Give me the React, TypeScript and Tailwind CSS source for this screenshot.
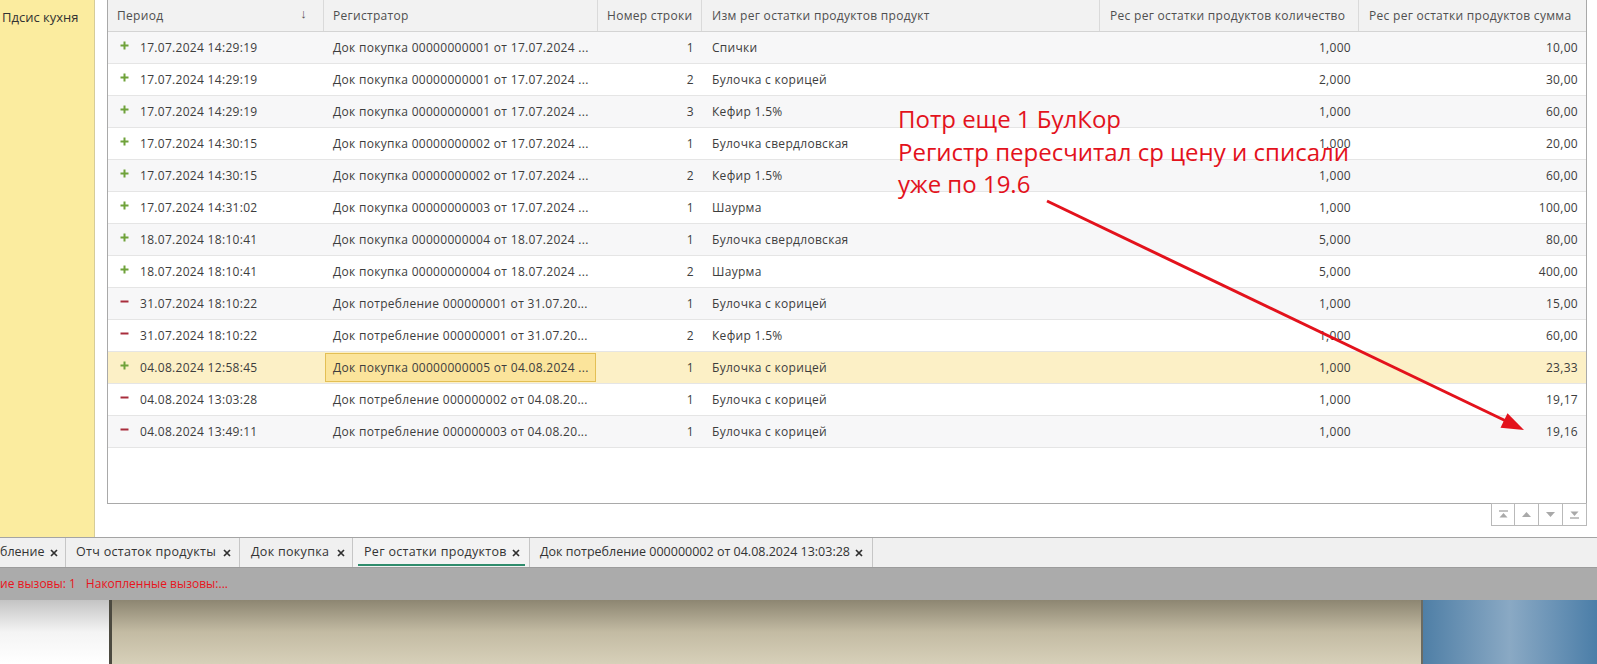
import React from "react";

type Row = {
  sign: "+" | "-";
  period: string;
  reg: string;
  line: string;
  product: string;
  qty: string;
  sum: string;
};

const rows: Row[] = [
  { sign: "+", period: "17.07.2024 14:29:19", reg: "Док покупка 00000000001 от 17.07.2024 ...", line: "1", product: "Спички", qty: "1,000", sum: "10,00" },
  { sign: "+", period: "17.07.2024 14:29:19", reg: "Док покупка 00000000001 от 17.07.2024 ...", line: "2", product: "Булочка с корицей", qty: "2,000", sum: "30,00" },
  { sign: "+", period: "17.07.2024 14:29:19", reg: "Док покупка 00000000001 от 17.07.2024 ...", line: "3", product: "Кефир 1.5%", qty: "1,000", sum: "60,00" },
  { sign: "+", period: "17.07.2024 14:30:15", reg: "Док покупка 00000000002 от 17.07.2024 ...", line: "1", product: "Булочка свердловская", qty: "1,000", sum: "20,00" },
  { sign: "+", period: "17.07.2024 14:30:15", reg: "Док покупка 00000000002 от 17.07.2024 ...", line: "2", product: "Кефир 1.5%", qty: "1,000", sum: "60,00" },
  { sign: "+", period: "17.07.2024 14:31:02", reg: "Док покупка 00000000003 от 17.07.2024 ...", line: "1", product: "Шаурма", qty: "1,000", sum: "100,00" },
  { sign: "+", period: "18.07.2024 18:10:41", reg: "Док покупка 00000000004 от 18.07.2024 ...", line: "1", product: "Булочка свердловская", qty: "5,000", sum: "80,00" },
  { sign: "+", period: "18.07.2024 18:10:41", reg: "Док покупка 00000000004 от 18.07.2024 ...", line: "2", product: "Шаурма", qty: "5,000", sum: "400,00" },
  { sign: "-", period: "31.07.2024 18:10:22", reg: "Док потребление 000000001 от 31.07.20...", line: "1", product: "Булочка с корицей", qty: "1,000", sum: "15,00" },
  { sign: "-", period: "31.07.2024 18:10:22", reg: "Док потребление 000000001 от 31.07.20...", line: "2", product: "Кефир 1.5%", qty: "1,000", sum: "60,00" },
  { sign: "+", period: "04.08.2024 12:58:45", reg: "Док покупка 00000000005 от 04.08.2024 ...", line: "1", product: "Булочка с корицей", qty: "1,000", sum: "23,33" },
  { sign: "-", period: "04.08.2024 13:03:28", reg: "Док потребление 000000002 от 04.08.20...", line: "1", product: "Булочка с корицей", qty: "1,000", sum: "19,17" },
  { sign: "-", period: "04.08.2024 13:49:11", reg: "Док потребление 000000003 от 04.08.20...", line: "1", product: "Булочка с корицей", qty: "1,000", sum: "19,16" },
];

const SELECTED = 10;

function Sign({ sign }: { sign: "+" | "-" }) {
  if (sign === "+") {
    return (
      <svg width="9" height="9" viewBox="0 0 9 9" className="mb-[5px] shrink-0">
        <path d="M4.5 0.5v8M0.5 4.5h8" stroke="#6fa23a" strokeWidth="2" />
      </svg>
    );
  }
  return (
    <svg width="9" height="9" viewBox="0 0 9 9" className="mb-[5px] shrink-0">
      <path d="M0.5 4.5h8" stroke="#a82d3c" strokeWidth="2" />
    </svg>
  );
}

function CloseX() {
  return (
    <svg width="8" height="8" viewBox="0 0 8 8" className="shrink-0">
      <path d="M1 1l6 6M7 1l-6 6" stroke="#2f2f2f" strokeWidth="1.7" />
    </svg>
  );
}

function NavButton({ kind }: { kind: "first" | "up" | "down" | "last" }) {
  return (
    <div className="w-[24px] h-[22px] border-r border-b border-[#b9b9b9] first:border-l flex items-center justify-center bg-white">
      <svg width="11" height="9" viewBox="0 0 11 9">
        {kind === "first" && (
          <>
            <path d="M1 1h9" stroke="#a9a9a9" strokeWidth="1.4" />
            <path d="M5.5 3L9.5 7.5H1.5Z" fill="#a9a9a9" />
          </>
        )}
        {kind === "up" && <path d="M5.5 2L10 7H1Z" fill="#a9a9a9" />}
        {kind === "down" && <path d="M5.5 7L10 2H1Z" fill="#a9a9a9" />}
        {kind === "last" && (
          <>
            <path d="M5.5 6L9.5 1.5H1.5Z" fill="#a9a9a9" />
            <path d="M1 8h9" stroke="#a9a9a9" strokeWidth="1.4" />
          </>
        )}
      </svg>
    </div>
  );
}

const cols = "grid grid-cols-[216px_274px_104px_398px_259px_227px]";

export default function App() {
  return (
    <div className="relative w-[1597px] h-[664px] overflow-hidden bg-white flex flex-col font-['Open_Sans',sans-serif] text-[12px] tracking-[0.3px] text-[#3d3d3d]">
      {/* main form */}
      <div className="flex h-[537px] shrink-0">
        <aside className="w-[95px] shrink-0 bg-[#fbec9f] border-r border-[#d6cc98] pl-[2px] pt-[8px] text-[13px] tracking-normal text-[#333]">
          Пдсис кухня
        </aside>
        <div className="flex-1 pl-[12px] pr-[10px] flex flex-col">
          <div className="h-[504px] border-x border-b border-[#a9a9a9] flex flex-col">
            {/* header */}
            <div className={`${cols} h-[32px] bg-[#f2f2f2] border-b border-[#d4d4d4] text-[#4f4f4f] shrink-0 whitespace-nowrap`}>
              <div className="flex items-center justify-between pl-[9px] pr-[16px] border-r border-[#dadada]">
                <span>Период</span>
                <span className="text-[13px] text-[#555] -mt-[4px]">↓</span>
              </div>
              <div className="flex items-center pl-[9px] border-r border-[#dadada]">Регистратор</div>
              <div className="flex items-center pl-[9px] border-r border-[#dadada]">Номер строки</div>
              <div className="flex items-center pl-[10px] border-r border-[#dadada]">Изм рег остатки продуктов продукт</div>
              <div className="flex items-center pl-[10px] border-r border-[#dadada]">Рес рег остатки продуктов количество</div>
              <div className="flex items-center pl-[10px]">Рес рег остатки продуктов сумма</div>
            </div>
            {/* rows */}
            {rows.map((r, i) => {
              const selected = i === SELECTED;
              const bg = selected ? "bg-[#fcf0c6]" : i % 2 === 0 ? "bg-[#f7f7f8]" : "bg-white";
              return (
                <div key={i} className={`${cols} h-[32px] border-b border-[#e5e5e5] ${bg} shrink-0 whitespace-nowrap`}>
                  <div className="flex items-center pl-[12px]">
                    <Sign sign={r.sign} />
                    <span className="ml-[11px]">{r.period}</span>
                  </div>
                  <div className="flex items-center py-[1px] pl-[1px] pr-[2px]">
                    <div
                      className={`w-full h-full flex items-center pl-[7px] overflow-hidden ${
                        selected ? "bg-[#fbe49b] border border-[#e3bf55]" : "border border-transparent"
                      }`}
                    >
                      {r.reg}
                    </div>
                  </div>
                  <div className="flex items-center justify-end pr-[8px]">{r.line}</div>
                  <div className="flex items-center pl-[10px]">{r.product}</div>
                  <div className="flex items-center justify-end pr-[8px]">{r.qty}</div>
                  <div className="flex items-center justify-end pr-[8px]">{r.sum}</div>
                </div>
              );
            })}
            <div className="flex-1 bg-white" />
          </div>
          <div className="flex justify-end -mt-[1px]">
            <div className="flex border-t border-[#b9b9b9]">
              <NavButton kind="first" />
              <NavButton kind="up" />
              <NavButton kind="down" />
              <NavButton kind="last" />
            </div>
          </div>
        </div>
      </div>

      {/* tabs */}
      <div className="h-[31px] shrink-0 flex bg-[#f0f0f0] border-t border-[#a4a4a4] text-[12.5px] text-[#333] border-b border-b-[#9c9c9c] whitespace-nowrap">
        <div className="w-[66px] flex items-center gap-[6px] border-r border-[#c6c6c6] tracking-[0px]">
          <span>бление</span>
          <CloseX />
        </div>
        <div className="w-[174px] flex items-center justify-between pl-[10px] pr-[8px] border-r border-[#c6c6c6]">
          <span>Отч остаток продукты</span>
          <CloseX />
        </div>
        <div className="w-[113px] flex items-center justify-between pl-[11px] pr-[7px] border-r border-[#c6c6c6]">
          <span>Док покупка</span>
          <CloseX />
        </div>
        <div className="w-[177px] relative flex items-center justify-between pl-[11px] pr-[9px] border-r border-[#c6c6c6] bg-[#f3f3f3]">
          <span>Рег остатки продуктов</span>
          <CloseX />
          <div className="absolute left-[5px] right-[4px] bottom-[1px] h-[2px] bg-[#2f8c6c]" />
        </div>
        <div className="w-[343px] flex items-center justify-between pl-[10px] pr-[9px] border-r border-[#c6c6c6] tracking-[0px]">
          <span>Док потребление 000000002 от 04.08.2024 13:03:28</span>
          <CloseX />
        </div>
        <div className="flex-1" />
      </div>

      {/* status */}
      <div className="h-[32px] shrink-0 bg-[#ababab] flex items-center text-[12px] tracking-normal text-[#e8141c] whitespace-nowrap">
        <span>ие вызовы: 1</span>
        <span className="ml-[10px]">Накопленные вызовы:...</span>
      </div>

      {/* desktop behind */}
      <div className="flex-1 flex">
        <div className="w-[109px] bg-gradient-to-b from-[#c4c4c4] via-[#f4f4f4] to-white" />
        <div className="w-[3px] bg-[#4c4a40]" />
        <div className="flex-1 bg-gradient-to-b from-[#8d8672] via-[#c3bba3] to-[#d7d0b9]" />
        <div className="w-[2px] bg-[#6b6b62]" />
        <div className="w-[174px] bg-gradient-to-r from-[#4f7fa6] via-[#8aa9c4] to-[#4b7ea8]" />
      </div>

      {/* annotation overlay */}
      <div className="absolute left-[898px] top-[103px] text-[24px] leading-[32.6px] tracking-normal text-[#e3121c] whitespace-nowrap pointer-events-none">
        <div>Потр еще 1 БулКор</div>
        <div>Регистр пересчитал ср цену и списали</div>
        <div>уже по 19.6</div>
      </div>
      <svg className="absolute left-0 top-0 pointer-events-none" width="1597" height="664">
        <line x1="1047" y1="201" x2="1506" y2="421" stroke="#e3121c" strokeWidth="3" />
        <path d="M1524 430L1507.5 413.3L1500.5 427.7Z" fill="#e3121c" />
      </svg>
    </div>
  );
}
